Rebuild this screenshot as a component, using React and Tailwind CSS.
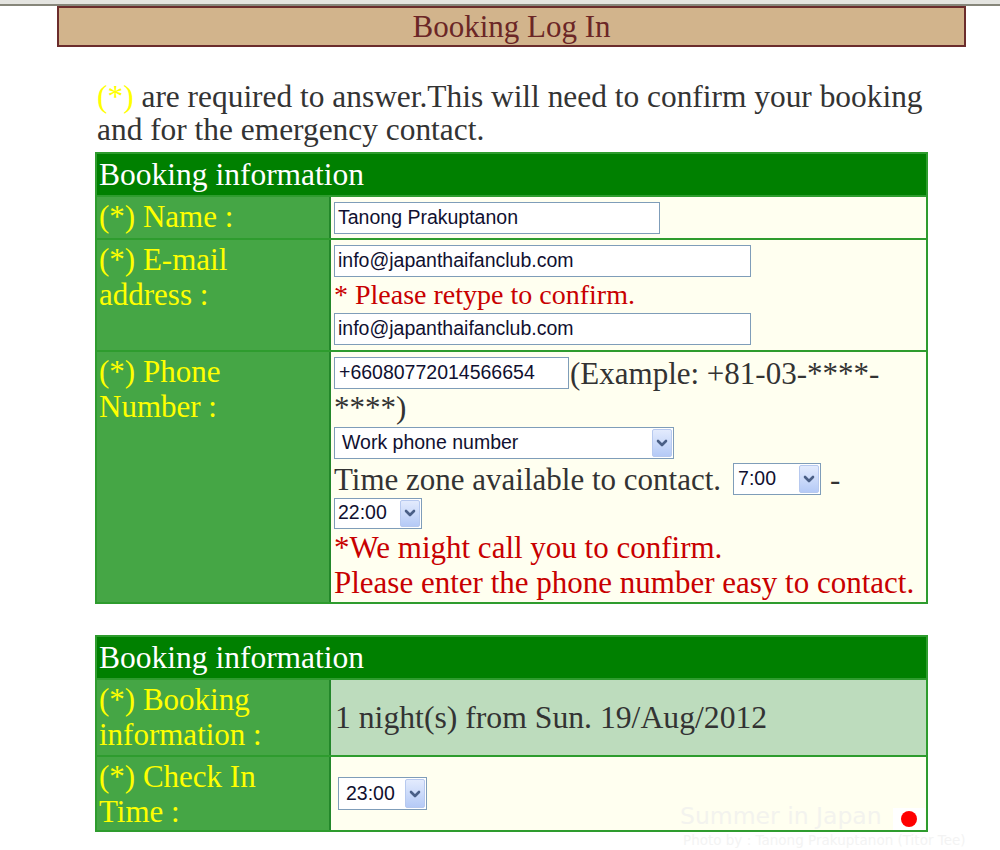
import React from "react";

function Chevron() {
  return (
    <svg width="12" height="10" viewBox="0 0 12 10" className="block">
      <path d="M2 3 L6 7 L10 3" fill="none" stroke="#4a5f86" strokeWidth="2.6" strokeLinecap="round" strokeLinejoin="round" />
    </svg>
  );
}

function Select({ value, className, textClass }) {
  return (
    <div className={"inline-flex items-stretch border border-[#7f9db9] bg-white font-['Liberation_Sans',Arial,sans-serif] text-[19.5px] text-[#101030] leading-none " + className}>
      <div className={"flex-1 flex items-center " + textClass}>{value}</div>
      <div className="my-[1px] mr-[1px] w-[20px] rounded-[2px] border border-[#b7c9ef] bg-gradient-to-b from-[#e3ebfd] to-[#b5caf6] flex items-center justify-center">
        <Chevron />
      </div>
    </div>
  );
}

function Input({ value, className }) {
  return (
    <div className={"h-[32px] border border-[#7f9db9] bg-white flex items-center pl-[3px] font-['Liberation_Sans',Arial,sans-serif] text-[19.5px] text-[#101030] leading-none " + className}>
      {value}
    </div>
  );
}

function Label({ children }) {
  return (
    <div className="bg-[#45a645] border-r-2 border-[#23872a] text-[#ffff00] pl-[2px] pt-[2px] leading-[35px]">
      {children}
    </div>
  );
}

export default function App() {
  return (
    <div className="relative min-h-[850px] bg-white font-['Liberation_Serif','Times_New_Roman',serif] text-[31px] text-[#333333]">
      <div className="h-[4px] bg-[#e4e4e0]" />
      <div className="h-[2px] bg-[#86867a]" />
      <div className="ml-[57px] w-[909px] h-[41px] border-2 border-[#6b2c2c] bg-[#d2b48c] flex items-center justify-center text-[#6b2626] leading-none">
        Booking Log In
      </div>

      <div className="ml-[95px] w-[833px]">
        <p className="mt-[33px] pl-[2px] leading-[33px] text-[31.4px] whitespace-nowrap">
          <span className="text-[#ffff00]">(*)</span> are required to answer.This will need to confirm your booking
          <br />
          and for the emergency contact.
        </p>

        {/* Table 1 */}
        <div className="mt-[6px] border-2 border-[#2e9c2e]">
          <div className="h-[41px] bg-[#008000] text-white flex items-center pl-[2px] leading-none text-[31.5px]">
            Booking information
          </div>
          <div className="grid grid-cols-[234px_1fr] border-t-2 border-[#2e9c2e]">
            <Label>(*) Name :</Label>
            <div className="h-[41px] bg-[#fffff0] pl-[3px] flex items-center">
              <Input value="Tanong Prakuptanon" className="w-[326px]" />
            </div>
          </div>
          <div className="grid grid-cols-[234px_1fr] border-t-2 border-[#2e9c2e]">
            <Label>
              (*) E-mail
              <br />
              address :
            </Label>
            <div className="h-[110px] bg-[#fffff0] pl-[3px] pt-[5px]">
              <Input value="info@japanthaifanclub.com" className="w-[417px]" />
              <div className="h-[35px] flex items-center text-[28px] text-[#c80000] leading-none">* Please retype to confirm.</div>
              <Input value="info@japanthaifanclub.com" className="mt-[1px] w-[417px]" />
            </div>
          </div>
          <div className="grid grid-cols-[234px_1fr] border-t-2 border-[#2e9c2e]">
            <Label>
              (*) Phone
              <br />
              Number :
            </Label>
            <div className="h-[250px] bg-[#fffff0] pl-[3px] pt-[4px] leading-none">
              <div className="h-[34px] flex items-center">
                <Input value="+66080772014566654" className="w-[235px] text-[18px] pl-[4px]" />
                <span className="ml-[1px]">(Example: +81-03-****-</span>
              </div>
              <div className="h-[34px] flex items-center">****)</div>
              <div className="h-[38px] flex items-center">
                <Select value="Work phone number" className="w-[340px] h-[32px]" textClass="pl-[7px]" />
              </div>
              <div className="h-[34px] flex items-center">
                <span>Time zone available to contact.</span>
                <Select value="7:00" className="ml-[12px] w-[88px] h-[32px]" textClass="pl-[4px]" />
                <span className="ml-[9px]">-</span>
              </div>
              <div className="h-[34px] flex items-center">
                <Select value="22:00" className="w-[88px] h-[31px]" textClass="pl-[3px]" />
              </div>
              <div className="h-[35px] flex items-center text-[#c80000]">*We might call you to confirm.</div>
              <div className="h-[34px] flex items-center text-[#c80000]">Please enter the phone number easy to contact.</div>
            </div>
          </div>
        </div>

        {/* Table 2 */}
        <div className="mt-[31px] border-2 border-[#2e9c2e]">
          <div className="h-[41px] bg-[#008000] text-white flex items-center pl-[2px] leading-none text-[31.5px]">
            Booking information
          </div>
          <div className="grid grid-cols-[234px_1fr] border-t-2 border-[#2e9c2e]">
            <Label>
              (*) Booking
              <br />
              information :
            </Label>
            <div className="h-[75px] bg-[#bddcbd] pl-[4px] flex items-center leading-none text-[31.7px]">
              1 night(s) from Sun. 19/Aug/2012
            </div>
          </div>
          <div className="grid grid-cols-[234px_1fr] border-t-2 border-[#2e9c2e]">
            <Label>
              (*) Check In
              <br />
              Time :
            </Label>
            <div className="h-[73px] bg-[#fffff0] pl-[7px] flex items-center">
              <Select value="23:00" className="w-[89px] h-[33px]" textClass="pl-[7px]" />
            </div>
          </div>
        </div>
      </div>

      {/* watermark overlay */}
      <div className="absolute left-[680px] top-[805px] font-['DejaVu_Sans',Verdana,sans-serif] text-[23.5px] leading-none text-[#f3f3ee] whitespace-nowrap">
        Summer in Japan
      </div>
      <div className="absolute left-[893px] top-[808px] w-[32px] h-[22px] bg-white flex items-center justify-center">
        <div className="w-[16px] h-[16px] rounded-full bg-[#ff0000]" />
      </div>
      <div className="absolute left-[683px] top-[834px] font-['DejaVu_Sans',Verdana,sans-serif] text-[13.5px] leading-none text-[#f3f3f3] whitespace-nowrap">
        Photo by : Tanong Prakuptanon (Titor Tee)
      </div>
    </div>
  );
}
